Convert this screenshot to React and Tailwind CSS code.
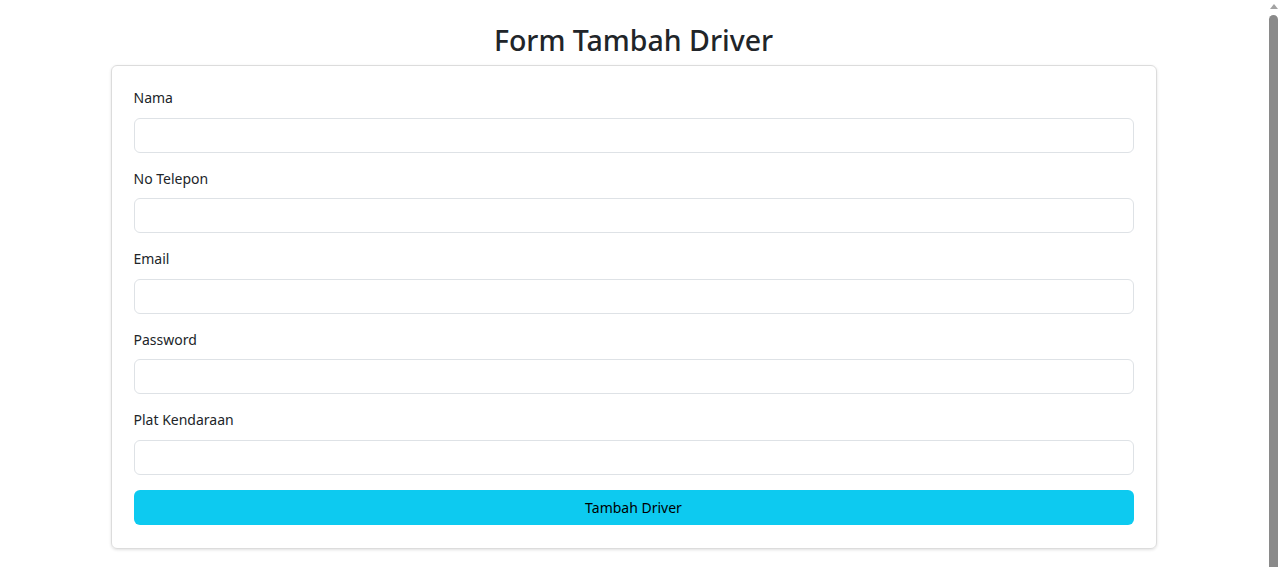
const fields = [
  { label: "Nama", type: "text" },
  { label: "No Telepon", type: "text" },
  { label: "Email", type: "email" },
  { label: "Password", type: "password" },
  { label: "Plat Kendaraan", type: "text" },
];

export default function App() {
  return (
    <div className="flex h-[567px] overflow-hidden bg-white text-[#212529] font-['Noto_Sans','Open_Sans',sans-serif]">
      <main className="flex-1 pl-[2px]">
        <div className="w-[1046px] mx-auto pt-[22px]">
          <h2 className="text-center text-[28.5px] leading-[36px] font-medium mb-[7px]">
            Form Tambah Driver
          </h2>

          <form className="border border-[#dcdcdc] rounded-[6px] shadow-[0_1px_3px_rgba(0,0,0,0.12)] px-[22px] pt-[21px] pb-[23px]">
            {fields.map((f) => (
              <div key={f.label} className="mb-[15px]">
                <label className="block text-[14px] leading-[22.5px] mb-[8px]">{f.label}</label>
                <input
                  type={f.type}
                  className="block w-full h-[35px] border border-[#dee2e6] rounded-[6px] px-3 outline-none"
                />
              </div>
            ))}
            <button
              type="button"
              className="w-full h-[35px] rounded-[6px] bg-[#0dcaf0] text-[14px] text-black"
            >
              Tambah Driver
            </button>
          </form>
        </div>
      </main>

      {/* page scrollbar */}
      <aside className="w-[15px] shrink-0 flex flex-col items-center pt-[4px] pl-[2px]">
        <div className="w-0 h-0 border-l-[4px] border-r-[4px] border-b-[5px] border-l-transparent border-r-transparent border-b-[#a3a3a3]" />
        <div className="mt-[6px] w-[9px] flex-1 rounded-t-full bg-[#8a8a8a]" />
      </aside>
    </div>
  );
}
